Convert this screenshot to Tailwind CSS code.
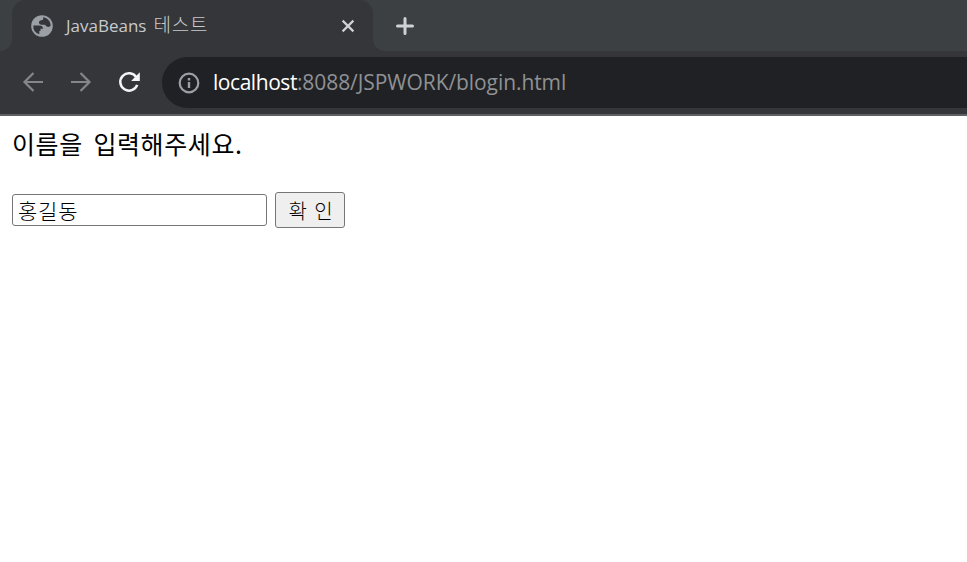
<!DOCTYPE html>
<html lang="ko">
<head>
<meta charset="utf-8">
<title>JavaBeans 테스트</title>
<script src="https://cdn.jsdelivr.net/npm/@tailwindcss/browser@4"></script>
</head>
<body class="h-[562px] overflow-hidden bg-white font-['Open_Sans','Noto_Sans_CJK_KR',sans-serif]">
<header class="h-[116px] border-b-2 border-[#5f6064] bg-[#35363a]">
  <div class="flex h-[51px]">
    <div class="w-3 rounded-br-[12px] bg-[#3c4043]"></div>
    <div class="w-[361px] bg-[#3c4043]">
      <div class="flex h-full items-center rounded-t-[14px] bg-[#35363a] pl-[18px] pr-[17px]">
        <svg class="size-6 shrink-0" viewBox="0 0 24 24"><circle cx="12" cy="12" r="10.8" fill="#9aa0a6"/><path fill="#35363a" d="M3.300 11.500h5.900c2.300 0 3.900 1.200 3.900 3.300h-2.600v2.300H9.300v3.200A8.700 8.700 0 0 1 3.300 11.500ZM13.200 3.300c4.200.6 7.400 4.200 7.500 8.300-.8 1.400-2.600 1.700-4 .9-.8-.5-1.200-1.400-2.100-1.700h-3c-2.800 0-3.500-3.200-1.300-4.200 1.400-.6 2.800-.3 2.900-1.600Z"/></svg>
        <span class="ml-3 flex-1 whitespace-nowrap pb-[2px] text-[17px] leading-6 text-[#c8cacd]">JavaBeans<span class="ml-[7px] font-['Noto_Sans_CJK_KR'] text-[19px] font-light tracking-[0.8px]">테스트</span></span>
        <svg class="mr-px size-[14px]" viewBox="0 0 14 14" fill="none" stroke="#d0d1d3" stroke-width="2.2"><path d="m1.6 1.6 10.8 10.8m0-10.8L1.6 12.4"/></svg>
      </div>
    </div>
    <div class="flex flex-1 items-center rounded-bl-[12px] bg-[#3c4043] pl-[23px]">
      <svg class="size-[18px]" viewBox="0 0 18 18" fill="none" stroke="#d0d1d3" stroke-width="3" stroke-linecap="round"><path d="M9 1.5v15M1.5 9h15"/></svg>
    </div>
  </div>
  <div class="flex h-[63px] items-center pl-[22px]">
    <svg class="mb-px size-[22px]" viewBox="0 0 22 22" fill="none" stroke="#85868a" stroke-width="2.2"><path d="M21 11H2.5M11.5 2l-9 9 9 9"/></svg>
    <svg class="mb-px ml-[26px] size-[22px]" viewBox="0 0 22 22" fill="none" stroke="#85868a" stroke-width="2.2"><path d="M1 11h18.5M10.5 2l9 9-9 9"/></svg>
    <svg class="mb-px ml-[26px] size-[22px]" viewBox="0 0 22 22"><path fill="none" stroke="#f3f4f5" stroke-width="2.5" d="M18.3 6.2A8.7 8.700 0 1 0 19.2 13.8"/><path fill="#f3f4f5" d="M21.800 1.200v8.700h-8.700z"/></svg>
    <div class="ml-[22px] flex h-[51px] flex-1 items-center rounded-l-full bg-[#202124] pl-[16px]">
      <svg class="mt-px size-[22px]" viewBox="0 0 22 22" fill="none" stroke="#9aa0a6" stroke-width="2.2"><circle cx="11" cy="11" r="9.300"/><path stroke-width="2.400" d="M11 10v6M11 6v2.400"/></svg>
      <div class="ml-[13px] whitespace-nowrap pb-px text-[21px] leading-7 tracking-[-0.08px] text-[#8f9194]"><span class="font-medium tracking-[-0.45px] text-white">localhost</span>:8088/JSPWORK/blogin.html</div>
    </div>
  </div>
</header>
<main class="px-3 pt-[9px] font-['Noto_Sans_CJK_KR',sans-serif] text-black">
  <p class="h-9 whitespace-nowrap text-[25px] leading-9 tracking-[0.6px] [word-spacing:3px]">이름을 입력해주세요.</p>
  <form class="mt-[31px] flex items-center gap-2">
    <input type="text" value="홍길동" class="h-8 w-[255px] rounded-[3px] border border-[#767676] bg-white px-[5px] text-[21px] leading-7 font-light tracking-[0.8px] outline-none">
    <button type="button" class="h-9 w-[70px] rounded-[3px] border border-[#767676] bg-[#efefef] pt-px pl-[2px] text-[20px] leading-8 font-light tracking-[0.8px]">확 인</button>
  </form>
</main>
</body>
</html>
